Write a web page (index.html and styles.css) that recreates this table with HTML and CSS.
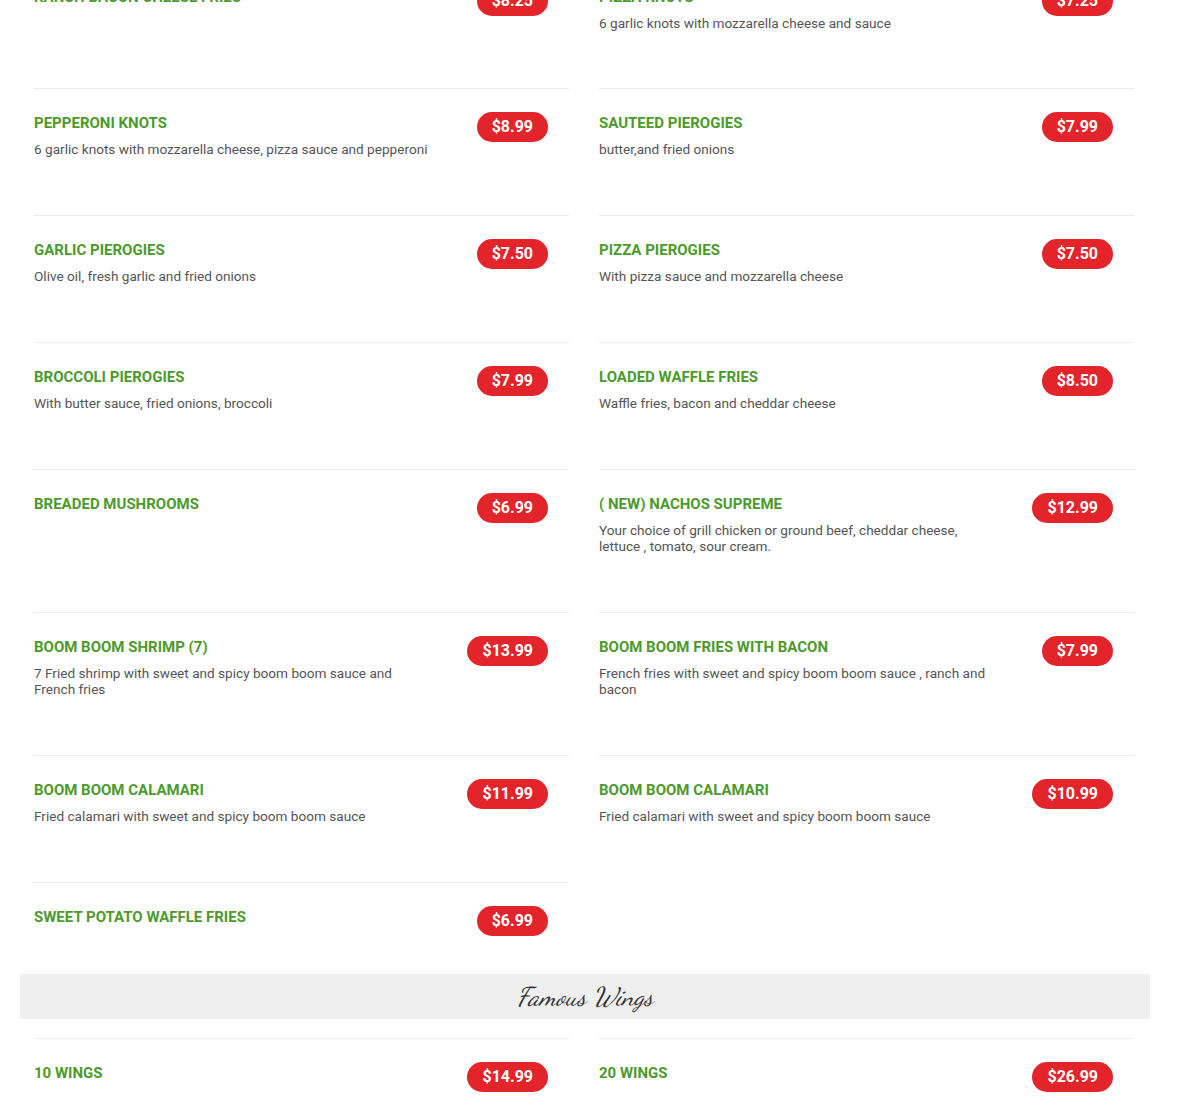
FILE: index.html
```html
<!DOCTYPE html>
<html lang="en">
<head>
  <meta charset="UTF-8" />
  <title>Menu - Appetizers &amp; Wings</title>
  <link rel="stylesheet" href="styles.css">
</head>
<body>

<main class="menu">
  <section class="menu-section">
    <div class="menu-list" id="appetizers"></div>
  </section>

  <section class="menu-section">
    <h2 class="section-title">Famous Wings</h2>
    <div class="menu-list" id="wings"></div>
  </section>
</main>

<script>
  const appetizers = [
    { name: 'Ranch Bacon Cheese Fries', price: '8.25' },
    { name: 'Pizza Knots', price: '7.25', desc: '6 garlic knots with mozzarella cheese and sauce' },
    { name: 'Pepperoni Knots', price: '8.99', desc: '6 garlic knots with mozzarella cheese, pizza sauce and pepperoni' },
    { name: 'Sauteed Pierogies', price: '7.99', desc: 'butter,and fried onions' },
    { name: 'Garlic Pierogies', price: '7.50', desc: 'Olive oil, fresh garlic and fried onions' },
    { name: 'Pizza Pierogies', price: '7.50', desc: 'With pizza sauce and mozzarella cheese' },
    { name: 'Broccoli Pierogies', price: '7.99', desc: 'With butter sauce, fried onions, broccoli' },
    { name: 'Loaded Waffle Fries', price: '8.50', desc: 'Waffle fries, bacon and cheddar cheese' },
    { name: 'Breaded Mushrooms', price: '6.99' },
    { name: '( New) Nachos Supreme', price: '12.99', desc: 'Your choice of grill chicken or ground beef, cheddar cheese, lettuce , tomato, sour cream.' },
    { name: 'Boom Boom Shrimp (7)', price: '13.99', desc: '7 Fried shrimp with sweet and spicy boom boom sauce and French fries' },
    { name: 'Boom Boom Fries with Bacon', price: '7.99', desc: 'French fries with sweet and spicy boom boom sauce , ranch and bacon' },
    { name: 'Boom Boom Calamari', price: '11.99', desc: 'Fried calamari with sweet and spicy boom boom sauce' },
    { name: 'Boom Boom Calamari', price: '10.99', desc: 'Fried calamari with sweet and spicy boom boom sauce' },
    { name: 'Sweet Potato Waffle Fries', price: '6.99' }
  ];

  const wings = [
    { name: '10 Wings', price: '14.99' },
    { name: '20 Wings', price: '26.99' }
  ];

  function renderList(el, items) {
    items.forEach(item => {
      const div = document.createElement('div');
      div.className = 'menu-item';
      div.innerHTML = `
        <div class="item-info">
          <h3 class="item-name">${item.name}</h3>
          ${item.desc ? `<p class="item-desc">${item.desc}</p>` : ''}
        </div>
        <span class="item-price">$${item.price}</span>
      `;
      el.appendChild(div);
    });
  }

  renderList(document.getElementById('appetizers'), appetizers);
  renderList(document.getElementById('wings'), wings);
</script>

</body>
</html>
```

FILE: styles.css
```css
body {
  font-family: Roboto, 'Liberation Sans', Arial, sans-serif;
  background: #fff;
  color: #555;
  margin: 0;
  padding: 0;
}

.menu {
  width: 1130px;
  margin: -38px 0 0 20px;
}

.menu-list {
  display: grid;
  grid-template-columns: 1fr 1fr;
  column-gap: 30px;
  row-gap: 20px;
  padding: 0 16px 0 14px;
}

.menu-item {
  display: flex;
  align-items: flex-start;
  border-top: 1px solid #ececec;
  padding: 22px 0 38px;
}

/* first row sits under the top edge */
#appetizers .menu-item:nth-child(-n+2) {
  padding-bottom: 37px;
}

.item-info {
  flex: 1;
  padding-top: 2px;
}

.item-name {
  margin: 0 0 8px;
  font-size: 15px;
  line-height: 20px;
  font-weight: 700;
  color: #4d9a2c;
  text-transform: uppercase;
}

.item-desc {
  margin: 0;
  font-size: 13.6px;
  line-height: 16px;
  color: #555;
}

.item-price {
  flex: none;
  margin: 1px 21px 0 40px;
  padding: 0 15px;
  height: 30px;
  line-height: 30px;
  border-radius: 15px;
  background: #e3242b;
  color: #fff;
  font-size: 16px;
  font-weight: 700;
}

.section-title {
  margin: 0 0 19px;
  height: 45px;
  line-height: 45px;
  background: #efefef;
  text-align: center;
  font-family: 'Dancing Script', 'Liberation Serif', serif;
  font-style: italic;
  font-weight: 400;
  font-size: 26px;
  color: #333;
}
```
